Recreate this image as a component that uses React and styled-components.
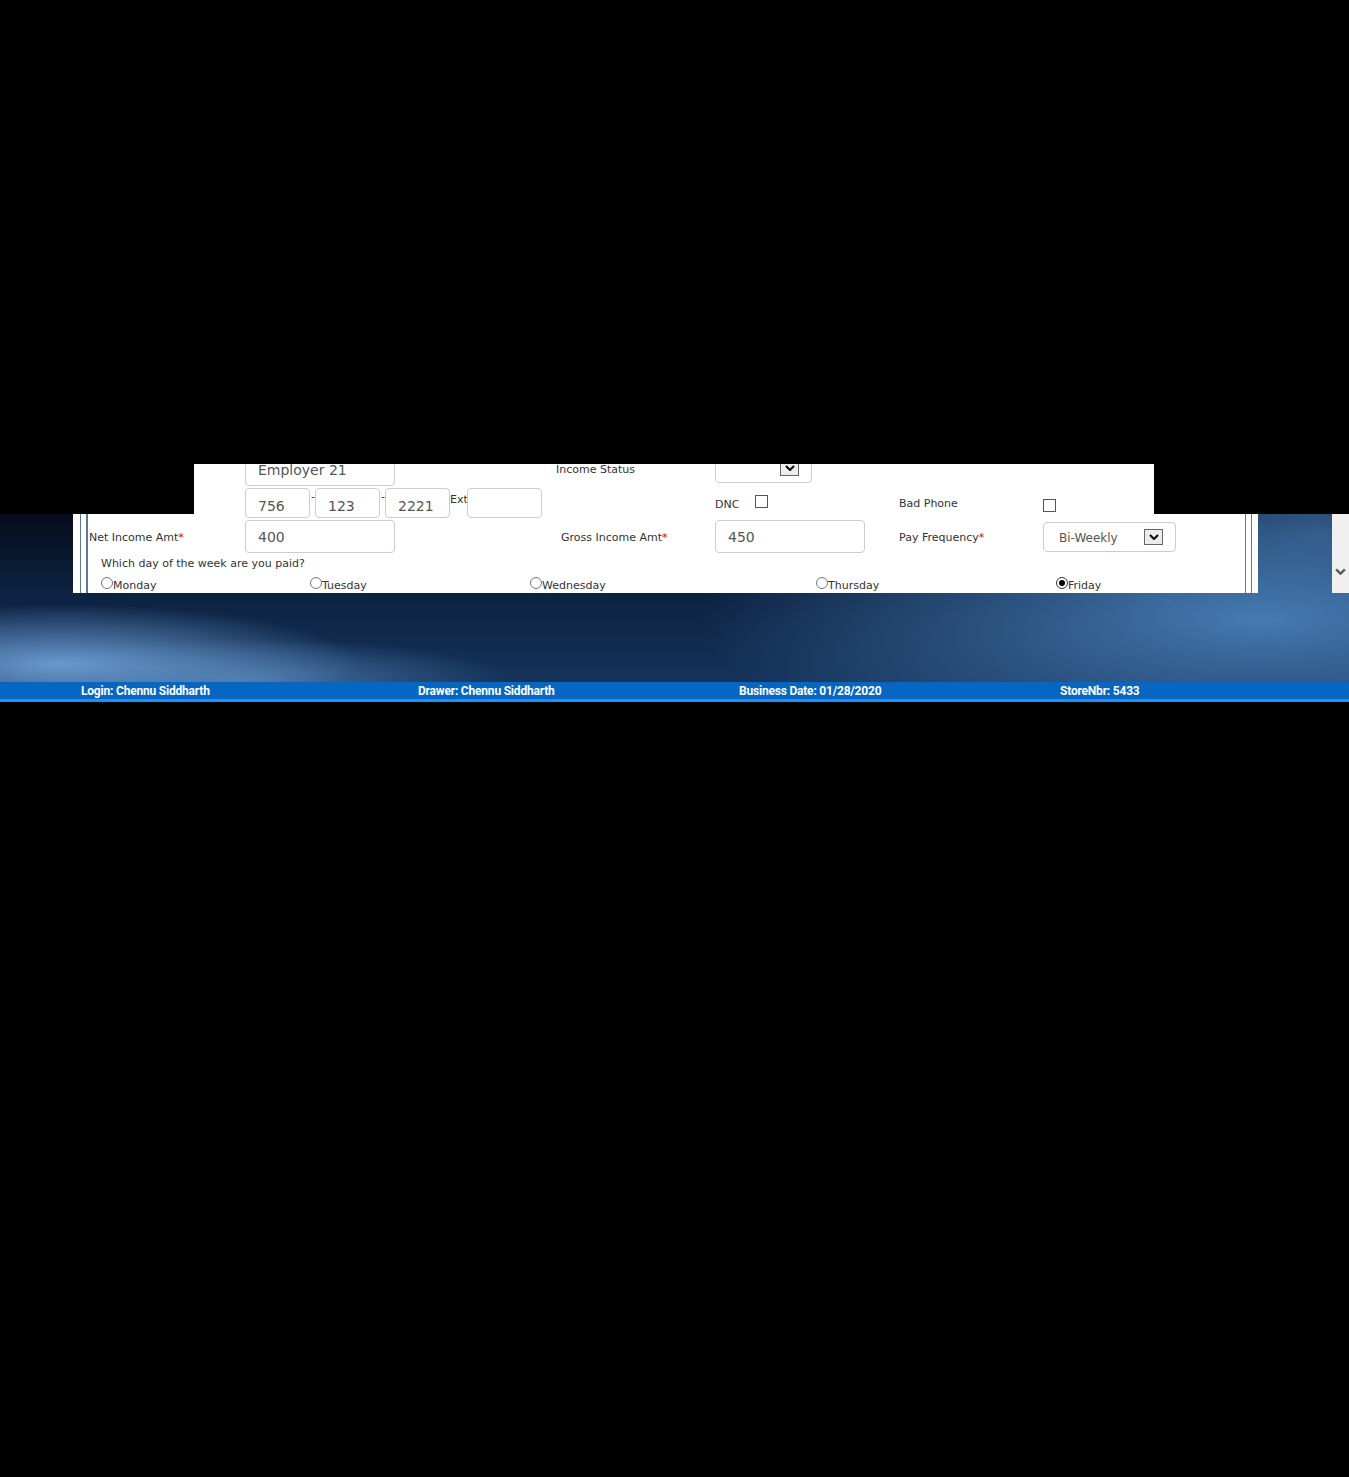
import React from "react";
import styled, { createGlobalStyle } from "styled-components";

const Global = createGlobalStyle`
  html, body { margin: 0; padding: 0; background: #000; }
  body { font-family: "DejaVu Sans", Verdana, sans-serif; }
  * { box-sizing: border-box; }
`;

const Page = styled.div`
  width: 1349px;
  min-height: 1477px;
  background: #000;
  padding-top: 464px;
`;

const Stage = styled.div`
  display: flex;
  align-items: flex-start;
  height: 218px;
  background:
    linear-gradient(#000, #000) 0 0 / 100% 50px no-repeat,
    radial-gradient(ellipse 300px 60px at 60px 150px, rgba(108, 158, 212, 0.95), rgba(108, 158, 212, 0) 100%) 0 50px / 100% 168px no-repeat,
    radial-gradient(ellipse 260px 40px at 250px 165px, rgba(90, 140, 195, 0.7), rgba(90, 140, 195, 0) 100%) 0 50px / 100% 168px no-repeat,
    radial-gradient(ellipse 560px 150px at 1260px 105px, rgba(72, 126, 182, 0.95), rgba(72, 126, 182, 0) 100%) 0 50px / 100% 168px no-repeat,
    radial-gradient(ellipse 300px 120px at 1320px 20px, rgba(50, 95, 145, 0.7), rgba(50, 95, 145, 0) 100%) 0 50px / 100% 168px no-repeat,
    linear-gradient(to bottom, #050d1b 0%, #0c2140 45%, #15335a 100%) 0 50px / 100% 168px no-repeat;
`;

const FormPanel = styled.div`
  flex-shrink: 0;
  margin-left: 73px;
  width: 1185px;
  height: 129px;
  background: #fff;
  padding: 0 6px 0 7px;
  display: flex;
  clip-path: polygon(121px 0, 1081px 0, 1081px 50px, 100% 50px, 100% 100%, 0 100%, 0 50px, 121px 50px);
  overflow: hidden;
`;

const OuterFrame = styled.div`
  flex: 1;
  display: flex;
  border-left: 1px solid #5b7a99;
  border-right: 1px solid #5b7a99;
  padding: 0 5px;
`;

const InnerFrame = styled.div`
  flex: 1;
  border-left: 2px solid #5b7a99;
  border-right: 1px solid #5b7a99;
`;

const Content = styled.div`
  margin-top: -9px;
  color: #333;
  font-size: 11px;
`;

const FieldGrid = styled.div`
  display: grid;
  grid-template-columns: 157px 311px 159px 184px 144px 1fr;
  grid-template-rows: 33px 32px 34px;
`;

const Cell = styled.div`
  display: flex;
  align-items: ${(p) => (p.$center ? "center" : "flex-start")};
  padding-left: ${(p) => p.$pl || 0}px;
  padding-top: ${(p) => p.$pt || 0}px;
`;

const Label = styled.span`
  font-size: 11px;
  line-height: 13px;
  color: #333;
  white-space: nowrap;
  margin-top: ${(p) => p.$mt || 0}px;
`;

const Req = styled.span`
  color: #e00000;
`;

const TextBox = styled.input`
  width: ${(p) => p.$w}px;
  height: ${(p) => p.$h}px;
  border: 1px solid #cccccc;
  border-radius: 4px;
  padding: ${(p) => p.$pt || 0}px 0 ${(p) => p.$pb || 0}px 12px;
  margin: 0;
  font-family: "DejaVu Sans", Verdana, sans-serif;
  font-size: 14px;
  color: #555;
  background: #fff;
  outline: none;
`;

const PhoneGroup = styled.div`
  display: flex;
  align-items: flex-start;
`;

const Dash = styled.span`
  width: 5px;
  font-size: 11px;
  line-height: 13px;
  margin-top: 2px;
  padding-left: 1px;
  color: #333;
`;

const ExtLabel = styled.span`
  width: 17px;
  font-size: 11px;
  line-height: 13px;
  margin-top: 5px;
  color: #333;
`;

const CheckBox = styled.span`
  display: inline-block;
  width: 13px;
  height: 13px;
  border: 1px solid #555;
  background: #fff;
  margin-top: ${(p) => p.$mt || 0}px;
  margin-left: ${(p) => p.$ml || 0}px;
`;

const SelectBox = styled.div`
  width: ${(p) => p.$w}px;
  height: ${(p) => p.$h}px;
  margin-top: ${(p) => p.$mt || 0}px;
  border: 1px solid #cccccc;
  border-radius: 4px;
  background: #fff;
  display: flex;
  align-items: center;
  padding: 0 12px 0 15px;
  font-size: 12px;
  color: #555;
`;

const SelectText = styled.span`
  flex: 1;
  white-space: nowrap;
  padding-top: 1px;
`;

const DropButton = styled.span`
  width: 19px;
  height: 16px;
  border: 1px solid #666;
  background: #ececec;
  display: flex;
  align-items: center;
  justify-content: center;
`;

const Question = styled.div`
  height: 18px;
  line-height: 18px;
  padding-top: 1px;
  padding-left: 13px;
  font-size: 11px;
  color: #333;
`;

const RadioRow = styled.div`
  display: grid;
  grid-template-columns: 209px 220px 286px 240px 1fr;
  padding-left: 13px;
`;

const RadioItem = styled.label`
  display: flex;
  align-items: flex-start;
  font-size: 11px;
  line-height: 14px;
  color: #333;
`;

const RadioDot = styled.span`
  width: 12px;
  height: 12px;
  margin-top: 5px;
  border-radius: 50%;
  border: 1px solid ${(p) => (p.$on ? "#333" : "#777")};
  background: #fff;
  display: flex;
  align-items: center;
  justify-content: center;
  &::after {
    content: "";
    width: 6px;
    height: 6px;
    border-radius: 50%;
    background: ${(p) => (p.$on ? "#000" : "transparent")};
  }
`;

const RadioText = styled.span`
  margin-top: 7px;
`;

const Scrollbar = styled.div`
  margin-top: 50px;
  margin-left: auto;
  width: 17px;
  height: 79px;
  background: #f0f0f0;
  display: flex;
  justify-content: center;
  padding-top: 54px;
`;

const StatusBar = styled.div`
  height: 20px;
  background: #0766c0;
  border-bottom: 3px solid #1d8fff;
  display: grid;
  grid-template-columns: 337px 321px 321px 1fr;
  align-items: center;
  padding-left: 81px;
  color: #fff;
  font-family: Roboto, "Liberation Sans", sans-serif;
  font-weight: 700;
  font-size: 12px;
  letter-spacing: -0.2px;
`;

const Chevron = ({ color = "#000", w = 10, h = 6, sw = 2 }) => (
  <svg width={w} height={h} viewBox="0 0 10 6">
    <path d="M1 1 L5 5 L9 1" fill="none" stroke={color} strokeWidth={sw} />
  </svg>
);

const days = ["Monday", "Tuesday", "Wednesday", "Thursday", "Friday"];

export default function App() {
  return (
    <>
      <Global />
      <Page>
        <Stage>
          <FormPanel>
            <OuterFrame>
              <InnerFrame>
                <Content>
                  <FieldGrid>
                    <Cell />
                    <Cell>
                      <TextBox $w={150} $h={31} $pb={2} defaultValue="Employer 21" readOnly />
                    </Cell>
                    <Cell>
                      <Label $mt={8}>Income Status</Label>
                    </Cell>
                    <Cell>
                      <SelectBox $w={97} $h={30} $mt={-2}>
                        <SelectText />
                        <DropButton>
                          <Chevron />
                        </DropButton>
                      </SelectBox>
                    </Cell>
                    <Cell />
                    <Cell />

                    <Cell />
                    <Cell>
                      <PhoneGroup>
                        <TextBox $w={65} $h={30} $pt={5} defaultValue="756" readOnly />
                        <Dash>-</Dash>
                        <TextBox $w={65} $h={30} $pt={5} defaultValue="123" readOnly />
                        <Dash>-</Dash>
                        <TextBox $w={65} $h={30} $pt={5} defaultValue="2221" readOnly />
                        <ExtLabel>Ext</ExtLabel>
                        <TextBox $w={75} $h={30} defaultValue="" readOnly />
                      </PhoneGroup>
                    </Cell>
                    <Cell />
                    <Cell>
                      <Label $mt={10}>DNC</Label>
                      <CheckBox $mt={7} $ml={16} />
                    </Cell>
                    <Cell>
                      <Label $mt={9}>Bad Phone</Label>
                    </Cell>
                    <Cell>
                      <CheckBox $mt={11} />
                    </Cell>

                    <Cell $center $pl={1}>
                      <Label>
                        Net Income Amt<Req>*</Req>
                      </Label>
                    </Cell>
                    <Cell>
                      <TextBox $w={150} $h={33} $pt={1} defaultValue="400" readOnly />
                    </Cell>
                    <Cell $center $pl={5}>
                      <Label>
                        Gross Income Amt<Req>*</Req>
                      </Label>
                    </Cell>
                    <Cell>
                      <TextBox $w={150} $h={33} $pt={1} defaultValue="450" readOnly />
                    </Cell>
                    <Cell $center>
                      <Label>
                        Pay Frequency<Req>*</Req>
                      </Label>
                    </Cell>
                    <Cell>
                      <SelectBox $w={133} $h={30} $mt={2}>
                        <SelectText>Bi-Weekly</SelectText>
                        <DropButton>
                          <Chevron />
                        </DropButton>
                      </SelectBox>
                    </Cell>
                  </FieldGrid>
                  <Question>Which day of the week are you paid?</Question>
                  <RadioRow>
                    {days.map((d) => (
                      <RadioItem key={d}>
                        <RadioDot $on={d === "Friday"} />
                        <RadioText>{d}</RadioText>
                      </RadioItem>
                    ))}
                  </RadioRow>
                </Content>
              </InnerFrame>
            </OuterFrame>
          </FormPanel>
          <Scrollbar>
            <Chevron color="#5a5a5a" w={11} h={7} sw={2.2} />
          </Scrollbar>
        </Stage>
        <StatusBar>
          <span>Login: Chennu Siddharth</span>
          <span>Drawer: Chennu Siddharth</span>
          <span>Business Date: 01/28/2020</span>
          <span>StoreNbr: 5433</span>
        </StatusBar>
      </Page>
    </>
  );
}
